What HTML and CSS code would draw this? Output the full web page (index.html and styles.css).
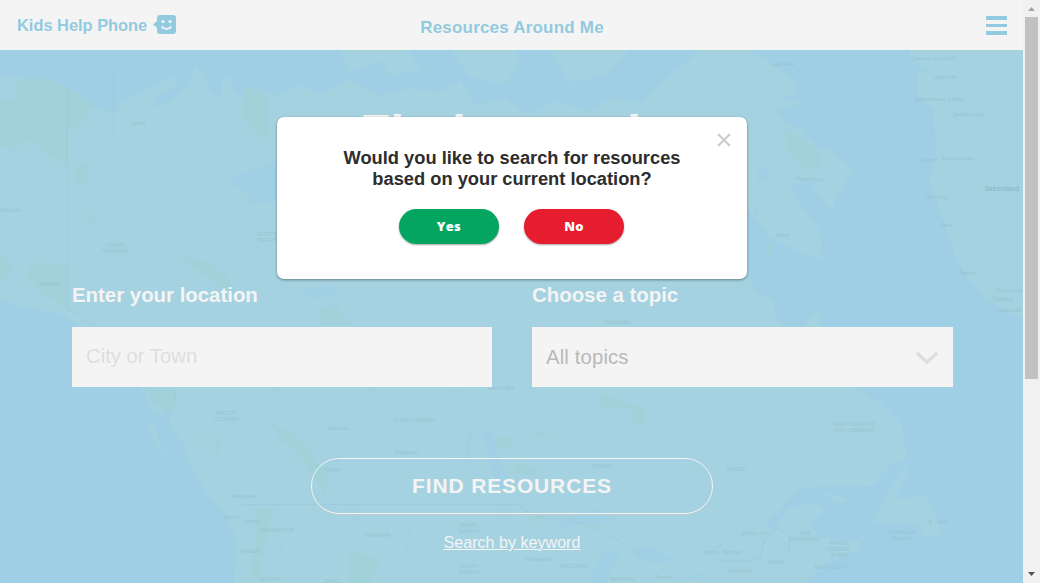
FILE: index.html
```html
<!DOCTYPE html>
<html lang="en">
<head>
<meta charset="utf-8">
<title>Resources Around Me</title>
<link rel="stylesheet" href="styles.css">
</head>
<body>
<div class="page">
  <header class="header">
    <div class="brand"><span class="brand-name">Kids Help Phone</span>
      <svg class="brand-icon" width="24" height="20" viewBox="0 0 24 20"><path fill="#92cae0" d="M7 0H20Q23 0 23 3V16Q23 19 20 19H7Q4 19 4 16V13L0 9.5L4 6V3Q4 0 7 0Z"/><circle cx="10" cy="6.5" r="1.6" fill="#f4f4f4"/><circle cx="17" cy="6.5" r="1.6" fill="#f4f4f4"/><path d="M8.500 11.5Q13.500 16.500 18.500 11.500" fill="none" stroke="#f4f4f4" stroke-width="1.8"/></svg>
    </div>
    <div class="title">Resources Around Me</div>
    <button class="menu" aria-label="Menu"><span></span><span></span><span></span></button>
  </header>
  <main class="hero">
    <svg class="map" width="1023" height="533" viewBox="0 50 1023 533" aria-hidden="true">
      <g fill="#a5d2e1">
        <path d="M0 76L40 80 62 92 82 98 98 108 115 113 120 103 140 93 165 80 180 77 175 86 158 96 150 108 170 101 190 84 195 65 203 73 212 92 220 98 224 78 230 76 233 88 240 97 246 87 260 88 275 96 300 85 320 94 350 80 380 96 410 88 440 92 460 80 475 105 505 98 528 115 555 101 590 112 610 98 640 103 670 75 690 60 700 50H750L768 60 795 83 797 94 779 98 800 101 797 105 775 110 785 121 800 130 815 145 830 150 845 162 852 170 846 181 837 195 832 210 817 195 812 180 790 187 800 205 815 222 822 240 820 260 800 252 770 237 748 210 740 220V274L720 290 700 300 690 330 687 365 706 386 680 405 677 420 685 440 681 463 667 466 648 440 646 409 610 403 592 386 545 365 526 338 525 320 545 302 570 288 610 279H690L750 279 757 293 772 299 776 318 795 335 818 310 822 326 850 355 855 385 880 403 902 425 907 459 889 466 873 486 801 487 780 510 765 525 775 528 789 507 817 503 825 510 808 523 818 536 849 543 865 535 858 550 825 564 805 583H234L237 540 226 515 203 487 187 459 183 443 169 424 174 407 161 416 151 409 140 387 110 370 95 352 80 328 64 315 30 308 0 300Z"/>
        <path d="M338 50L350 72 380 61 390 75 420 71 410 50ZM450 50L470 76 504 85 520 60 515 50ZM550 50L570 82 605 76 630 50Z"/>
        <path d="M910 50H1023V319L1000 307 985 299 968 278 955 255 945 225 929 180 936 155 934 111 918 94 918 72 932 73 910 60Z"/>
        <path d="M902 469L910 466 896 496 905 499 925 495 932 509 943 533 926 538 918 525 873 523 884 499ZM825 492L842 497 850 503 835 503ZM147 424L155 423 158 438 166 455 155 445ZM194 476L210 479 228 491 243 502 240 517 223 503Z"/>
      </g>
      <g fill="#a1d2d9">
        <path d="M18 83L47 77 80 94 94 105 76 132 67 125V165L48 155 25 138 12 152 0 145V100L15 98ZM244 91L250 87 268 96V139L252 132 242 115ZM75 164H88L90 178 84 185 74 180ZM88 213L95 216 92 224 87 220ZM0 255L12 261V275L0 281ZM30 262L66 266V310L26 280ZM180 256L202 260 228 276 240 300 210 280ZM145 388H173L176 400 169 412 153 403ZM786 130L802 135 823 160 815 170 802 167 786 147ZM768 242L774 244 770 256 765 252ZM318 309L337 305 348 325 324 325ZM497 436L514 437 511 448 498 446ZM535 433L546 429 546 437 534 438ZM600 393L630 403 645 409V425L632 424 630 408 600 406ZM269 421L290 433 310 447 318 468 300 458 280 440ZM194 435L204 438 200 445ZM213 437L222 434 218 458ZM255 510L273 507 269 530 260 575 250 583 255 540ZM300 455L330 470 325 495ZM350 550L380 559 370 583H350ZM515 462L534 468 535 475 517 473ZM527 520L549 511 545 522Z"/>
      </g>
      <g fill="#a0d0e4">
        <path d="M227 180L248 171 280 160V205L262 203 242 207 253 198 240 190ZM481 428L494 433 496 455 508 478 502 490 491 470ZM466 435L472 432 470 455 472 466 466 456ZM550 530L575 514 596 509 613 518 595 524 572 525ZM590 583L600 555 612 549 620 553 610 572 606 583ZM630 550L655 546 672 560 660 564 643 560ZM670 580L705 572 701 579ZM300 291L335 286 338 296 310 299ZM758 163L772 175 756 185ZM752 202L763 214 755 217Z"/>
      </g>
      <g fill="none" stroke="#98c6d3" stroke-width=".7" opacity=".75">
        <path d="M67.500 91V310L80 315 94 327M243 504.500H520L523 510 544 519 570 519 600 530 625 544 650 565M720 561H753L754 557 760 559 764 540 776 528 789 534 789 552 797 562M175 388V405L169 412"/>
        <path opacity=".45" d="M113 68V140M275 387V411M234 544H239M250 552L280 552 283 542M345 498L360 525 410 527 405 560M700 562L720 545 755 528 775 515M456 387V460M371 387V450M504 505V583M339 435L336 472"/>
      </g>
      <g class="map-labels">
        <text x="115" y="247">YUKON</text><text x="115" y="253">TERRITORY</text><text x="273" y="236">NORTHWEST</text><text x="273" y="242">TERRITORIES</text><text x="139" y="125">Inuvik</text><text x="50" y="286">McCarthy</text><text x="0" y="212" class="start">Fairbanks</text><text x="226" y="415">BRITISH</text><text x="226" y="421">COLUMBIA</text><text x="244" y="498">Vancouver</text><text x="231" y="519">Victoria</text><text x="252" y="523">Seattle</text><text x="277" y="532">WASHINGTON</text><text x="249" y="553">Portland</text><text x="269" y="581">OREGON</text>
        <text x="339" y="430">Edmonton</text><text x="414" y="422">SASKATCHEWAN</text><text x="406" y="454">Saskatoon</text><text x="333" y="471">Calgary</text><text x="501" y="390">MANITOBA</text><text x="602" y="468">ONTARIO</text><text x="378" y="537">MONTANA</text><text x="469" y="527">NORTH</text><text x="469" y="533">DAKOTA</text><text x="469" y="568">SOUTH</text><text x="469" y="574">DAKOTA</text><text x="332" y="583">IDAHO</text><text x="538" y="561">Minneapolis</text><text x="574" y="568">WISCONSIN</text><text x="623" y="581">MICHIGAN</text><text x="664" y="579">Toronto</text><text x="710" y="554">Ottawa</text><text x="732" y="554">Montreal</text><text x="736" y="471">QUEBEC</text><text x="755" y="535">Quebec City</text><text x="776" y="564">MAINE</text><text x="740" y="573">VERMONT</text><text x="805" y="535">NEW</text><text x="805" y="541">BRUNSWICK</text><text x="839" y="545">PRINCE</text><text x="839" y="551">EDWARD</text><text x="839" y="557">ISLAND</text><text x="831" y="569">NOVA SCOTIA</text><text x="854" y="426">NEWFOUNDLAND</text><text x="854" y="432">AND LABRADOR</text><text x="938" y="524">St John's</text><text x="902" y="534">St Pierre and</text><text x="902" y="540">Miquelon</text>
        <text x="933" y="60">Qaanaaq Savissivik</text><text x="945" y="79">Upernavik</text><text x="930" y="101">Qeqertarsuaq</text><text x="956" y="101">Ilulissat</text><text x="968" y="116">Qasigiannguit</text><text x="958" y="160">Kangerlussuaq</text><text x="929" y="162">Sisimiut</text><text x="936" y="199">Maniitsoq</text><text x="947" y="227">Nuuk</text><text x="968" y="275">Paamiut</text><text x="1009" y="292">Narsarsuaq</text><text x="1003" y="301">Qaqortoq</text><text x="1010" y="312">Nanortalik</text><text x="782" y="66">Clyde River</text><text x="810" y="181">Pangnirtung</text><text x="783" y="237">Iqaluit</text><text x="618" y="324">Hudson Bay</text><text class="country" x="1002" y="191">Greenland</text>
      </g>
    </svg>
    <h1 class="headline">Fix inspection</h1>
    <form class="search">
      <div class="fields">
        <label class="field">Enter your location<input class="control" type="text" placeholder="City or Town"></label>
        <div class="field field-topic">Choose a topic<div class="control select"><span>All topics</span><svg width="22" height="14" viewBox="0 0 22 14"><path d="M1 3L11 12L21 3" fill="none" stroke="#dedede" stroke-width="3.500"/></svg></div></div>
      </div>
      <button class="find" type="button"><span>FIND RESOURCES</span></button>
      <a class="keyword" href="#">Search by keyword</a>
    </form>
  </main>
</div>
<aside class="scrollbar"><svg width="17" height="17"><path d="M5 11H12L8.500 7Z" fill="#a3a3a3"/></svg><div class="thumb"></div><svg class="down" width="17" height="17"><path d="M5 6H12L8.500 10Z" fill="#505050"/></svg></aside>
<section class="dialog" role="dialog">
  <button class="close" aria-label="Close"><svg width="14" height="14"><path d="M1 1L13 13M13 1L1 13" stroke="#cbcbcb" stroke-width="2"/></svg></button>
  <p class="question">Would you like to search for resources<br>based on your current location?</p>
  <div class="actions"><button class="yes">Yes</button><button class="no">No</button></div>
</section>
</body>
</html>
```
FILE: styles.css
```css
* { box-sizing: border-box; }
body { margin: 0; height: 583px; overflow: hidden; display: flex; font-family: "Liberation Sans", Arial, sans-serif; color: #f4f4f4; }
button { border: 0; padding: 0; font-family: inherit; color: inherit; }
.page { width: 1023px; height: 583px; overflow: hidden; }
.header { height: 50px; background: #f4f4f4; color: #92cae0; display: grid; grid-template-columns: 1fr auto 1fr; align-items: center; padding: 0 16px 0 17px; font-weight: bold; }
.brand { display: flex; align-items: center; gap: 6px; white-space: nowrap; padding-bottom: 1px; }
.brand-name { font-size: 16.4px; line-height: 20px; }
.title { font-size: 17px; letter-spacing: .2px; line-height: 20px; padding-top: 5px; }
.menu { justify-self: end; width: 21px; display: grid; gap: 4px; background: none; padding-top: 1px; }
.menu span { height: 3.500px; background: #92cae0; }
.hero { height: 533px; position: relative; background: #9fcfe4; }
.map { position: absolute; inset: 0; }
.map-labels { font-size: 5px; fill: #96c4d2; text-anchor: middle; }
.map-labels .start { text-anchor: start; }
.map-labels .country { font-size: 7px; font-weight: bold; fill: #8dbccb; }
.headline { position: relative; margin: 0; padding: 55px 0 0 360px; font-size: 50px; line-height: 57px; word-spacing: 6px; white-space: nowrap; }
.search { position: relative; padding: 120px 71px 0 72px; display: flex; flex-direction: column; align-items: center; }
.fields { width: 881px; display: grid; grid-template-columns: 420px 421px; gap: 40px; align-self: flex-start; }
.field { display: block; font-size: 20.4px; line-height: 26px; font-weight: bold; }
.control { display: flex; width: 100%; height: 60px; margin-top: 19px; border: 0; border-radius: 0; background: #f4f4f4; padding: 0 14px; font: 20.3px "Liberation Sans", Arial, sans-serif; }
input.control { padding-bottom: 2px; }
.control::placeholder { color: #dedede; opacity: 1; }
.select { color: #b9b9b9; align-items: center; justify-content: space-between; letter-spacing: .15px; padding-right: 15px; }
.find { width: 402px; height: 56px; margin-top: 71px; border: 1px solid #f4f4f4; border-radius: 28px; background: transparent; box-shadow: 0 1px 1px #b7cdd0; font-size: 21px; font-weight: bold; letter-spacing: .85px; }
.keyword { margin-top: 18px; font-size: 16.1px; line-height: 20px; color: #f4f4f4; }
.scrollbar { width: 17px; height: 583px; background: #f1f1f1; display: flex; flex-direction: column; align-items: center; }
.scrollbar svg { display: block; flex: none; }
.thumb { width: 13px; height: 362px; background: #c1c1c1; }
.down { margin-top: auto; }
.dialog { position: absolute; left: 277px; top: 117px; width: 470px; height: 162px; border-radius: 7px; background: #fff; color: #2d2d2d; box-shadow: 0 1px 3px rgba(0,0,0,.4); text-align: center; padding-top: 30px; }
.close { position: absolute; right: 16px; top: 16px; width: 14px; height: 14px; background: none; }
.close svg { display: block; }
.question { margin: 0; font-size: 18.3px; line-height: 21px; font-weight: bold; }
.actions { display: flex; justify-content: center; gap: 25px; margin-top: 20px; padding-right: 1px; }
.actions button { width: 100px; height: 35px; padding-bottom: 1px; border-radius: 18px; color: #fff; font: 800 13px "Open Sans", sans-serif; letter-spacing: .3px; box-shadow: 0 1px 2px rgba(0,0,0,.35); }
.yes { background: #04a561; }
.no { background: #e51d2e; }
```
